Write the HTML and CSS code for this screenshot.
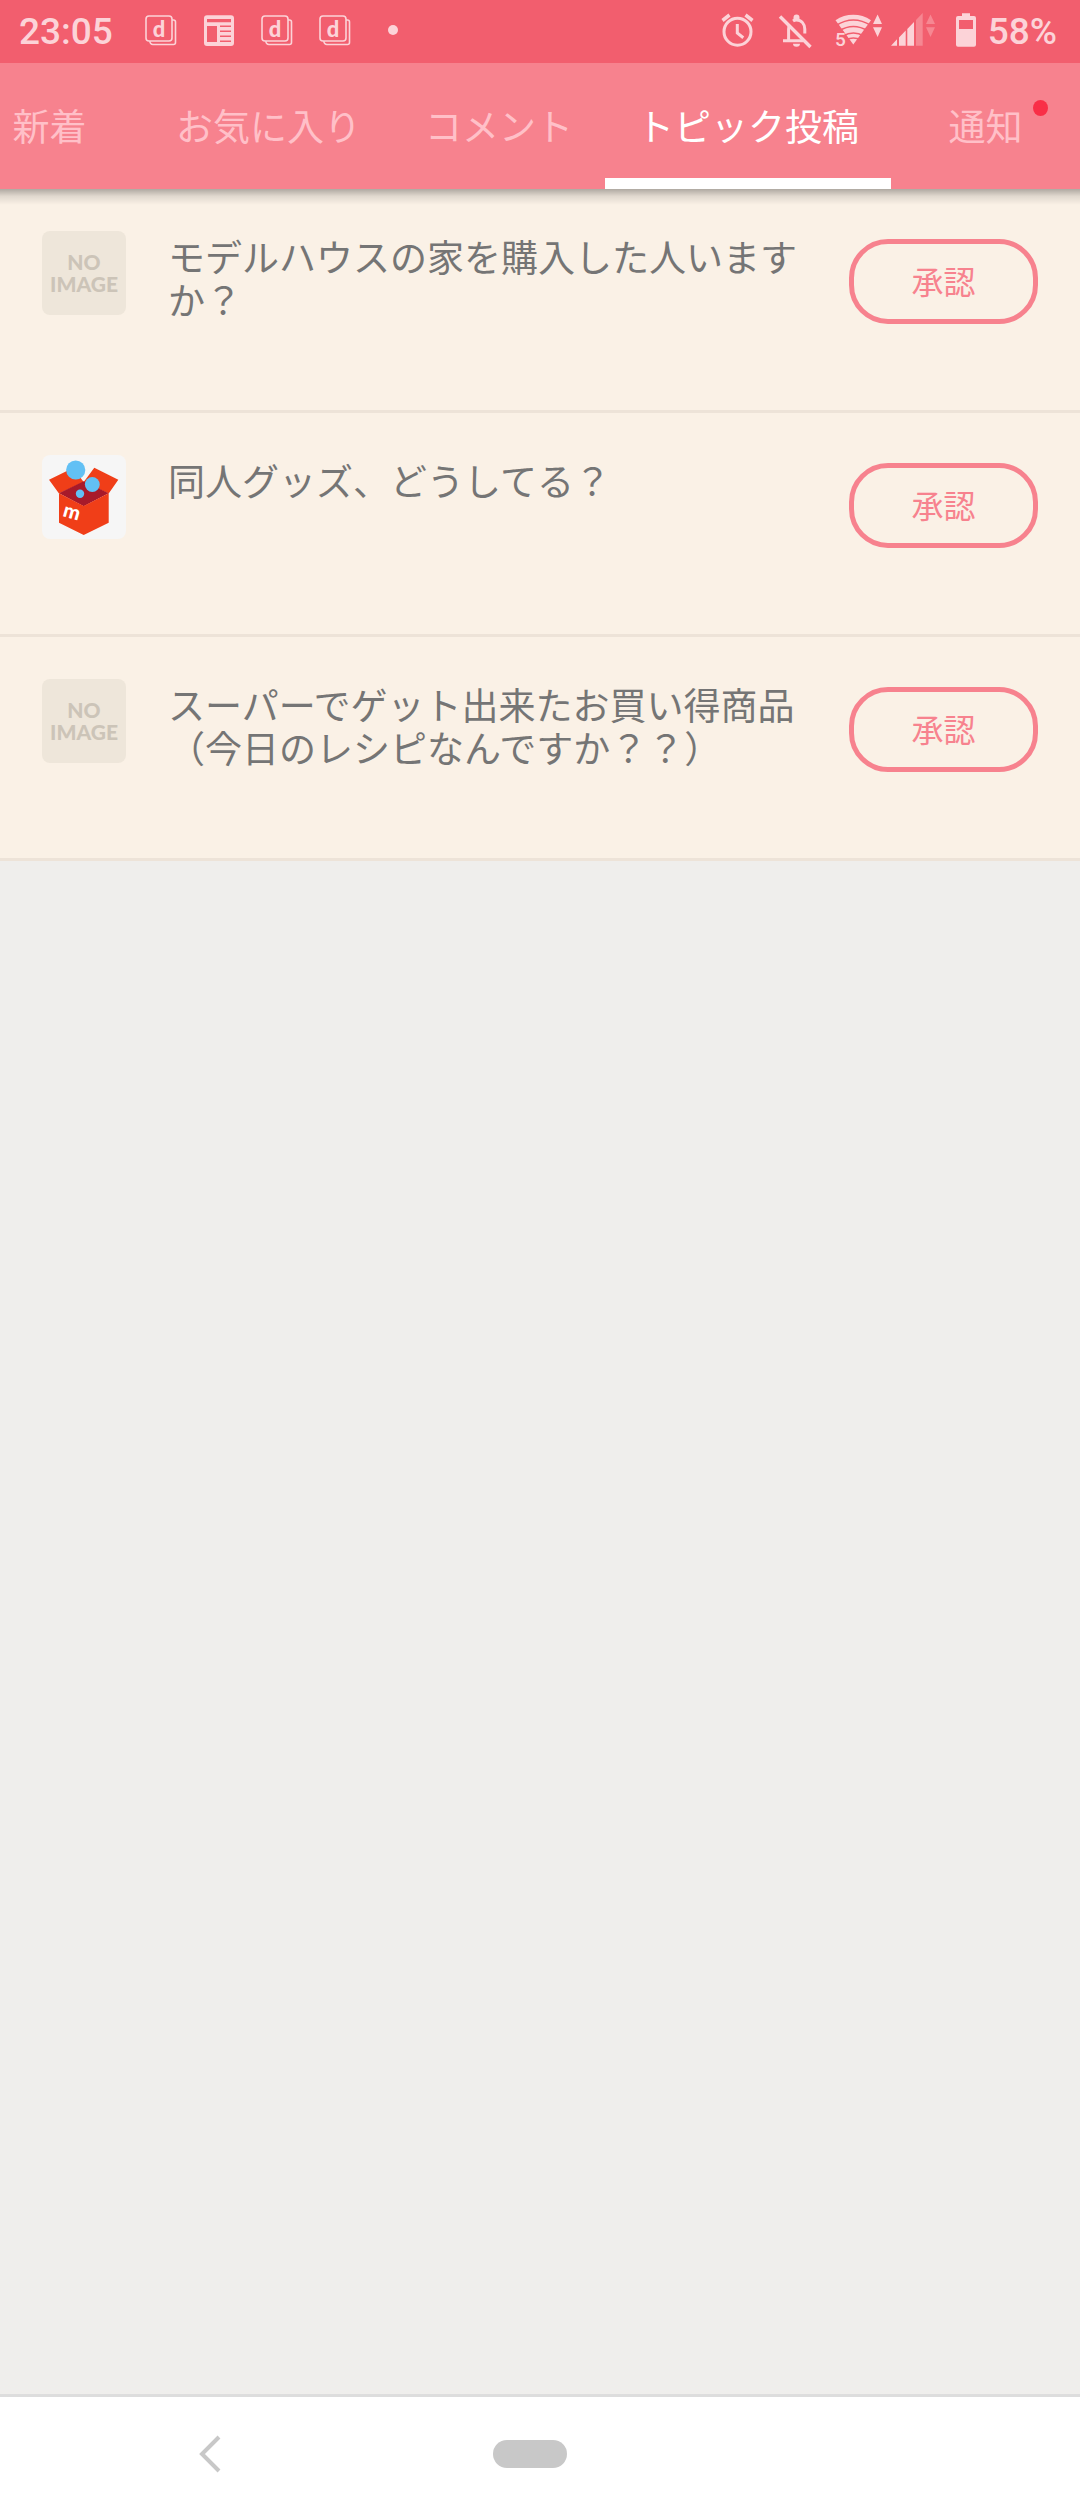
FILE: index.html
```html
<!DOCTYPE html>
<html lang="ja">
<head>
    <meta charset="UTF-8">
    <meta name="viewport" content="width=device-width, initial-scale=1">
    <title>トピック投稿</title>
    <link rel="stylesheet" href="styles.css">
</head>
<body>
    <header>
        <div class="status-bar">
            <time class="clock">23:05</time>
            <div class="notifications">
                <svg width="32" height="39" viewBox="0 0 32 39">
                    <rect x="1" y="4" width="26" height="25" rx="3" class="outline"/>
                    <path d="M27 8h1.500a2 2 0 0 1 2 2v20.500a2 2 0 0 1-2 2H8a3 3 0 0 1-3-3.500" class="outline"/>
                    <text x="14" y="25" text-anchor="middle" class="icon-letter">d</text>
                </svg>
                <svg width="32" height="39" viewBox="0 0 32 39">
                    <path fill="currentColor" fill-rule="evenodd" d="M4 3.300h24a3 3 0 0 1 3 3V31a3 3 0 0 1-3 3H4a3 3 0 0 1-3-3V6.300a3 3 0 0 1 3-3zM4 7v3.300h24V7zM4 14v16h10V14zM17 13.600v1.300h11v-1.300zM17 18.600v1.300h11v-1.300zM17 23.600v1.300h11v-1.300zM17 28.600v1.300h11v-1.300z"/>
                </svg>
                <svg width="32" height="39" viewBox="0 0 32 39">
                    <rect x="1" y="4" width="26" height="25" rx="3" class="outline"/>
                    <path d="M27 8h1.500a2 2 0 0 1 2 2v20.500a2 2 0 0 1-2 2H8a3 3 0 0 1-3-3.500" class="outline"/>
                    <text x="14" y="25" text-anchor="middle" class="icon-letter">d</text>
                </svg>
                <svg width="32" height="39" viewBox="0 0 32 39">
                    <rect x="1" y="4" width="26" height="25" rx="3" class="outline"/>
                    <path d="M27 8h1.500a2 2 0 0 1 2 2v20.500a2 2 0 0 1-2 2H8a3 3 0 0 1-3-3.500" class="outline"/>
                    <text x="14" y="25" text-anchor="middle" class="icon-letter">d</text>
                </svg>
                <svg width="32" height="39" viewBox="0 0 32 39"><circle cx="16" cy="18" r="5" fill="currentColor"/></svg>
            </div>
            <div class="system">
                <!-- alarm -->
                <svg width="36" height="39" viewBox="0 0 36 39" fill="none" stroke="currentColor" stroke-width="3">
                    <circle cx="18.500" cy="19.700" r="13.500"/>
                    <path d="M18.300 12v9l6 4.700"/>
                    <path stroke-width="3.500" d="M3.500 8.500l7-5.500M26.500 3l7 5.500"/>
                </svg>
                <!-- notifications off -->
                <svg width="40" height="39" viewBox="0 0 40 39" fill="none" stroke="currentColor" stroke-width="3">
                    <path d="M8 28.700h20M13.600 28V17c0-1.700.4-3.200 1-4.500M18 9c1-.7 2-1 3.500-1 5 0 8.300 4 8.300 9v4.500"/>
                    <path stroke-width="3.400" d="M5 4.500l30.500 30.500"/>
                    <path fill="currentColor" stroke="none" d="M18.500 8V5.500a3 3 0 0 1 6 0V8zM18 31.700h7a3.500 3 0 0 1-7 0z"/>
                </svg>
                <!-- wifi and mobile signal -->
                <svg width="101" height="39" viewBox="0 0 101 39" fill="currentColor">
                    <path d="M18.300 32.500L.5 8.300C11 1 25.500 1 36 8.300z"/>
                    <g fill="none" class="wifi-gap">
                        <path d="M1 13.500q17.300-11 35 0"/>
                        <path d="M4 19q14.300-9 29 0"/>
                        <path d="M8 24q10.300-6 21 0"/>
                        <path d="M11 28q7.300-4 15 0"/>
                    </g>
                    <path class="wifi-clear" d="M0 19h8l3 5v12H0z"/>
                    <text x="0" y="34" class="wifi-band">5</text>
                    <path d="M42.600 2.500L47 12h-9zM38 15.300h9L42.600 25z"/>
                    <path d="M56 33.800l6-6.500v6.500zM64 25.500l6.700-7v15.300H64zM72.300 17l6.700-7v23.800h-6.700z"/>
                    <path class="faded" d="M81 8l6.700-7v32.800H81zM95.500 2.500l4.500 9.500h-9zM91 15.300h9L95.500 25z"/>
                </svg>
                <div class="battery">
                    <svg width="20" height="39" viewBox="0 0 20 39">
                        <path fill="currentColor" fill-rule="evenodd" d="M6 1.300h8V4h4a2 2 0 0 1 2 2v26.700a2 2 0 0 1-2 2H2a2 2 0 0 1-2-2V6a2 2 0 0 1 2-2h4zM3 8v9h14V8z"/>
                    </svg>
                    <span>58%</span>
                </div>
            </div>
        </div>

        <nav class="tabs">
            <a href="#new" class="tab">新着</a>
            <a href="#favorites" class="tab">お気に入り</a>
            <a href="#comments" class="tab">コメント</a>
            <a href="#topics" class="tab active" aria-current="page">トピック投稿</a>
            <a href="#notices" class="tab">通知<span class="badge"></span></a>
        </nav>
    </header>

    <main>
        <ul class="topics">
            <li class="topic">
                <div class="thumb no-image">NO<br>IMAGE</div>
                <p class="title">モデルハウスの家を購入した人いますか？</p>
                <button type="button" class="approve">承認</button>
            </li>
            <li class="topic">
                <svg class="thumb" viewBox="0 0 84 84" role="img" aria-label="メルカリ">
                    <rect width="84" height="84" fill="#f6f6f6"/>
                    <path fill="#f03e18" d="M7 24.700L31 13l10.700 14L17 38.500zM41.700 27l10.600-14.300 24 12-9.600 13.800z"/>
                    <path fill="#a81a2a" d="M17 38.300l24.700-12 25 12-25 13z"/>
                    <path fill="#f03e18" d="M17 38.300L41.700 51l25-12.700v29.400L41.700 80 17 67.700z"/>
                    <circle cx="33.700" cy="15" r="9.600" fill="#62c0f4"/>
                    <circle cx="50.300" cy="29.500" r="7.400" fill="#62c0f4"/>
                    <circle cx="38" cy="38.700" r="4.200" fill="#62c0f4"/>
                    <text x="20" y="61" transform="rotate(16 20 61)" class="box-letter">m</text>
                </svg>
                <p class="title">同人グッズ、どうしてる？</p>
                <button type="button" class="approve">承認</button>
            </li>
            <li class="topic">
                <div class="thumb no-image">NO<br>IMAGE</div>
                <p class="title">スーパーでゲット出来たお買い得商品（今日のレシピなんですか？？）</p>
                <button type="button" class="approve">承認</button>
            </li>
        </ul>
    </main>

    <footer class="nav-bar">
        <button type="button" class="nav-button" aria-label="戻る">
            <svg width="24" height="40" viewBox="0 0 24 40" fill="none" stroke="#c8c8c8" stroke-width="4">
                <path d="M21 3L4 20l17 17"/>
            </svg>
        </button>
        <button type="button" class="nav-button" aria-label="ホーム"><span class="home-pill"></span></button>
    </footer>
</body>
</html>
```
FILE: styles.css
```css
* { box-sizing: border-box; }
body {
    margin: 0;
    min-height: 100vh;
    display: flex;
    flex-direction: column;
    background-color: #efeeec;
    font-family: "Noto Sans CJK JP", sans-serif;
}
svg { display: block; flex-shrink: 0; }
button { border: 0; padding: 0; background: none; font-family: inherit; }

/* status bar */
.status-bar {
    display: flex;
    align-items: center;
    height: 63px;
    padding: 0 23px 0 19px;
    background-color: #f25e6e;
    color: #fcd3d8;
    font-family: Roboto, sans-serif;
    font-size: 37px;
    font-weight: 500;
    line-height: 41px;
}
.notifications { display: flex; gap: 26px; margin-left: 32px; }
.system { display: flex; align-items: center; gap: 20px; margin-left: auto; }
.battery { display: flex; align-items: center; gap: 12px; }
.outline { fill: none; stroke: currentColor; stroke-width: 1.6px; }
.icon-letter { font: 900 22px Lato, sans-serif; fill: currentColor; }
.wifi-gap { stroke: #f25e6e; stroke-width: 1.5px; }
.wifi-clear { fill: #f25e6e; }
.wifi-band { font: 500 19px Roboto, sans-serif; }
.faded { fill: #f68792; }

/* tabs */
header { position: relative; }
header::after {
    content: "";
    position: absolute;
    top: 100%;
    left: 0;
    right: 0;
    height: 16px;
    background: linear-gradient(rgba(0, 0, 0, 0.3), rgba(0, 0, 0, 0.1) 45%, rgba(0, 0, 0, 0));
}
.tabs {
    display: flex;
    justify-content: flex-end;
    overflow: hidden;
    background-color: #f7828e;
}
.tab {
    position: relative;
    flex-shrink: 0;
    min-width: 189px;
    height: 126px;
    padding: 0 32px;
    color: #ffc0c8;
    font-size: 37px;
    line-height: 124px;
    text-align: center;
    text-decoration: none;
}
.tab.active { color: #fff; box-shadow: inset 0 -11px #fff; }
.badge {
    position: absolute;
    top: 37px;
    right: 32px;
    width: 15px;
    height: 16px;
    border-radius: 50%;
    background-color: #f92f47;
}

/* topic list */
main { flex: 1; }
.topics { margin: 0; padding: 0; list-style: none; }
.topic {
    display: flex;
    align-items: flex-start;
    gap: 42px;
    min-height: 224px;
    padding: 42px;
    background-color: #faf1e6;
    border-bottom: 3px solid #ede3d8;
}
.thumb {
    flex: none;
    width: 84px;
    height: 84px;
    border-radius: 8px;
}
.no-image {
    padding-top: 20px;
    background-color: #eee6da;
    color: #ccc4b8;
    font: 900 21px/22px Lato, sans-serif;
    text-align: center;
}
.box-letter { font: 900 20px Lato, sans-serif; fill: #fff; }
.title {
    flex: 1;
    margin: 4px 0 0;
    color: #757575;
    font-size: 37px;
    line-height: 43px;
}
.approve {
    flex: none;
    width: 189px;
    height: 85px;
    margin-top: 8px;
    padding-bottom: 3px;
    border: 5px solid #f7828e;
    border-radius: 39px;
    color: #f7828e;
    font-size: 32px;
}

/* navigation bar */
.nav-bar {
    display: grid;
    grid-template-columns: 21fr 11fr 22fr;
    align-items: center;
    height: 126px;
    padding-bottom: 10px;
    background-color: #fff;
    border-top: 3px solid #ddd;
}
.nav-button { display: flex; justify-content: center; }
.home-pill {
    width: 74px;
    height: 28px;
    border-radius: 14px;
    background-color: #c8c8c8;
}
```
